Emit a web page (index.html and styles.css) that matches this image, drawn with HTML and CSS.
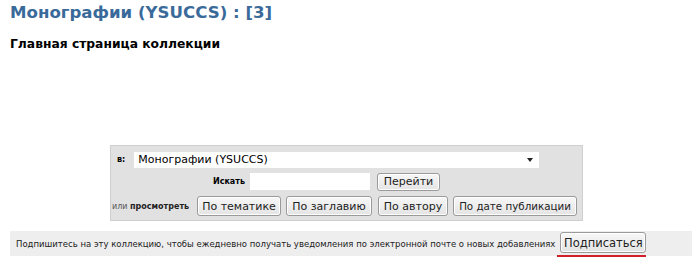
FILE: index.html
```html
<!DOCTYPE html>
<html>
<head>
<meta charset="utf-8">
<link rel="stylesheet" href="styles.css">
</head>
<body>
<div class="page">
  <h1 class="title">Монографии (YSUCCS) : [3]</h1>
  <h2 class="subtitle">Главная страница коллекции</h2>
  <div class="search-wrap">
    <div class="search">
      <div class="row row-scope">
        <span class="lbl-b">в:</span>
        <div class="select"><span>Монографии (YSUCCS)</span><span class="caret"></span></div>
      </div>
      <div class="row row-query">
        <span class="lbl-b lbl-query">Искать</span>
        <div class="input"></div>
        <button class="btn btn-go">Перейти</button>
      </div>
      <div class="row row-browse">
        <span class="lbl-browse"><span class="lbl-or">или</span> <b>просмотреть</b></span>
        <button class="btn w-subj">По тематике</button>
        <button class="btn w-title">По заглавию</button>
        <button class="btn w-auth">По автору</button>
        <button class="btn w-date">По дате публикации</button>
      </div>
    </div>
  </div>
  <div class="subscribe">
    <span class="sub-text">Подпишитесь на эту коллекцию, чтобы ежедневно получать уведомления по электронной почте о новых добавлениях</span>
    <button class="btn btn-sub">Подписаться</button>
  </div>
</div>
</body>
</html>
```
FILE: styles.css
```css
html, body { margin: 0; padding: 0; background: #fff; }
body { font-family: "DejaVu Sans", Verdana, sans-serif; color: #000; }
.page { width: 700px; height: 262px; overflow: hidden; padding: 0 8px 0 10px; box-sizing: border-box; }
.title { margin: 0; padding-top: 2px; font-size: 16.6px; font-weight: bold; color: #3a6a9a; line-height: 22px; }
.subtitle { margin: 12px 0 0; font-size: 12.3px; font-weight: bold; line-height: 16px; }
.search-wrap { margin-top: 93px; padding-left: 100px; }
.search { width: 473px; height: 76px; box-sizing: border-box; background: #e1e1e1; border: 1px solid #cfcfcf; display: flex; flex-direction: column; }
.row { display: flex; align-items: center; white-space: nowrap; }
.row-scope { height: 22px; padding: 3px 0 0 6px; }
.lbl-b { font-size: 8px; font-weight: bold; }
.select { margin-left: 9px; width: 405px; height: 16px; background: #fff; display: flex; align-items: center; justify-content: space-between; font-size: 11px; padding: 0 6px 0 4px; box-sizing: border-box; }
.caret { width: 0; height: 0; border-left: 3px solid transparent; border-right: 3px solid transparent; border-top: 4px solid #222; }
.row-query { height: 22px; padding-left: 102px; }
.lbl-query { width: 32px; }
.input { margin-left: 5px; width: 120px; height: 17px; background: #fff; }
.btn { font-family: "DejaVu Sans", sans-serif; font-size: 11px; color: #222; height: 20px; padding: 0; white-space: nowrap; background: linear-gradient(#f7f7f7, #e4e4e4); border: 1px solid #9a9a9a; border-radius: 3px; box-shadow: inset 0 0 0 1px #fff; }
.btn-go { margin-left: 7px; width: 63px; height: 18px; }
.row-browse { height: 28px; padding-left: 1px; gap: 5px; }
.row-browse .btn { height: 20px; flex: none; }
.w-subj { width: 84px; }
.w-title { width: 86px; }
.w-auth { width: 70px; margin-left: 1px; }
.w-date { width: 124px; font-size: 10.3px; }
.lbl-browse { font-size: 8px; color: #222; width: 80px; }
.lbl-or { color: #555; }
.subscribe { margin-top: 10px; height: 25px; background: #eeeeee; display: flex; align-items: center; padding-left: 6px; width: 682px; box-sizing: border-box; white-space: nowrap; }
.sub-text { font-size: 8.5px; color: #222; }
.btn-sub { margin-left: 5px; margin-top: -2px; font-size: 11.5px; height: 21px; width: 86px; position: relative; }
.btn-sub::after { content: ""; position: absolute; left: -4px; right: -1px; bottom: -5px; height: 2px; background: #d0202a; }
```
